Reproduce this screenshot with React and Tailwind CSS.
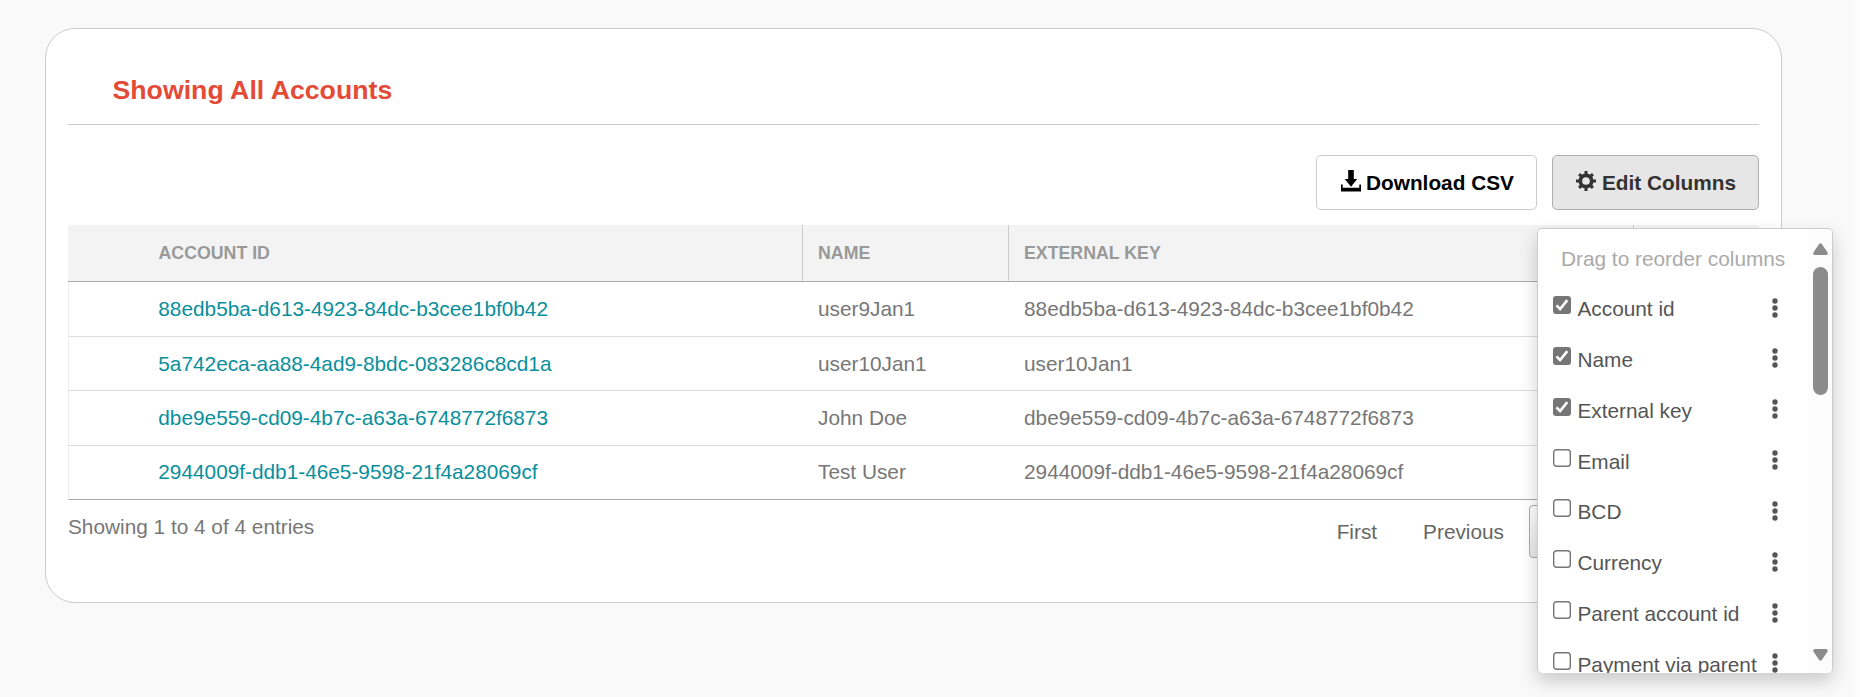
const rows = [
  ["88edb5ba-d613-4923-84dc-b3cee1bf0b42", "user9Jan1", "88edb5ba-d613-4923-84dc-b3cee1bf0b42"],
  ["5a742eca-aa88-4ad9-8bdc-083286c8cd1a", "user10Jan1", "user10Jan1"],
  ["dbe9e559-cd09-4b7c-a63a-6748772f6873", "John Doe", "dbe9e559-cd09-4b7c-a63a-6748772f6873"],
  ["2944009f-ddb1-46e5-9598-21f4a28069cf", "Test User", "2944009f-ddb1-46e5-9598-21f4a28069cf"],
];

const columns = [
  ["Account id", true],
  ["Name", true],
  ["External key", true],
  ["Email", false],
  ["BCD", false],
  ["Currency", false],
  ["Parent account id", false],
  ["Payment via parent", false],
];

function DownloadIcon() {
  return (
    <svg className="h-[22px] w-5 shrink-0" viewBox="0 0 20 22" fill="currentColor">
      <path d="M7.200 0h5.600v9H16.200L10 16.700 3.800 9h3.400zM0 14.500h1.700v3.200h16.600v-3.200H20v7H0z" />
    </svg>
  );
}

function GearIcon() {
  return (
    <svg className="size-5 shrink-0" viewBox="0 0 20 20" fill="none" stroke="currentColor">
      <circle cx="10" cy="10" r="5.700" strokeWidth="3.700" />
      <path
        d="M10 0v4M10 16v4M0 10h4M16 10h4M3.100 3.100l2.800 2.800M14.100 14.100l2.800 2.800M3.100 16.900l2.800-2.800M14.100 5.900l2.800-2.800"
        strokeWidth="3"
      />
    </svg>
  );
}

function CheckBox({ checked }) {
  return (
    <svg className="size-[18px] shrink-0" viewBox="0 0 18 18" fill="none">
      {checked ? (
        <>
          <rect width="18" height="18" rx="3" fill="#767676" />
          <path d="M3.500 9.300l3.600 3.800 7.200-9" stroke="#fff" strokeWidth="2.600" />
        </>
      ) : (
        <rect x="0.700" y="0.700" width="16.600" height="16.600" rx="2.800" fill="#fff" stroke="#767676" strokeWidth="1.400" />
      )}
    </svg>
  );
}

function Dots() {
  return (
    <svg className="h-5 w-1.5 shrink-0" viewBox="0 0 6 20" fill="#555">
      <circle cx="3" cy="3" r="2.700" />
      <circle cx="3" cy="10" r="2.700" />
      <circle cx="3" cy="17" r="2.700" />
    </svg>
  );
}

function ColumnMenu() {
  return (
    <div className="absolute top-[73px] right-[-74px] flex h-[445px] w-[296px] overflow-hidden rounded-[5px] border border-b-0 border-[#ccc] bg-white font-normal shadow-[0_8px_18px_rgba(0,0,0,0.19)]">
      <div className="w-[270px] shrink-0 pl-[15px]">
        <div className="mt-[15px] h-[30px] pl-[8px] leading-[30px] whitespace-nowrap text-[#aaa]">Drag to reorder columns</div>
        <ul className="mt-[14px]">
          {columns.map(([label, checked]) => (
            <li key={label} className="flex h-[50.850px] items-start text-[#555]">
              <div className="mt-[8px]">
                <CheckBox checked={checked} />
              </div>
              <span className="ml-[6.500px] w-[194.300px] pt-[6px] leading-[30px] whitespace-nowrap">{label}</span>
              <div className="mt-[9.500px]">
                <Dots />
              </div>
            </li>
          ))}
        </ul>
      </div>
      <div className="flex flex-1 flex-col items-center bg-[#fcfcfc] pt-[14px] pb-[12.500px]">
        <svg className="h-3 w-[15px]" viewBox="0 0 15 12" fill="#8b8b8b">
          <path d="M6 1.200Q7.500-.6 9 1.200l5.600 8.200Q15.300 12 13 12H2Q-.3 12 .4 9.400z" />
        </svg>
        <div className="mt-[12px] h-[128px] w-[15px] rounded-full bg-[#8b8b8b]" />
        <svg className="mt-auto h-3 w-[15px]" viewBox="0 0 15 12" fill="#8b8b8b">
          <path d="M6 10.800Q7.500 12.600 9 10.800l5.600-8.200Q15.300 0 13 0H2Q-.3 0 .4 2.600z" />
        </svg>
      </div>
    </div>
  );
}

export default function App() {
  return (
    <div className="h-[697px] overflow-hidden border-r-[5px] border-[#fcfcfc] bg-[#f9f9f9] pt-7 pl-[45px] font-['Liberation_Sans',Arial,sans-serif] text-[20.800px] text-[#777]">
      <main className="h-[575px] w-[1737px] rounded-[30px] border border-[#ccc] bg-white px-[22px]">
        <header className="flex h-24 items-center border-b border-[#ccc] pt-[26px] pl-[44.500px]">
          <h1 className="text-[26.700px] leading-8 font-bold text-[#e44b37]">Showing All Accounts</h1>
        </header>

        <div className="relative mt-[30px] flex justify-end gap-[15px] font-bold">
          <button className="flex h-[55px] w-[221px] items-center rounded-[5px] border border-[#ccc] bg-white pl-[24px] text-black">
            <span className="-mt-1"><DownloadIcon /></span>
            <span className="ml-[5px] whitespace-nowrap">Download CSV</span>
          </button>
          <button className="flex h-[55px] w-[207px] items-center rounded-[5px] border border-[#adadad] bg-[#e6e6e6] pl-[23px] text-[#333]">
            <span className="-mt-1"><GearIcon /></span>
            <span className="ml-[6px] whitespace-nowrap">Edit Columns</span>
          </button>
          <ColumnMenu />
        </div>

        <table className="mt-[15px] w-full table-fixed border-separate border-spacing-0">
          <colgroup>
            <col className="w-[734px]" />
            <col className="w-[206px]" />
            <col className="w-[625px]" />
            <col />
          </colgroup>
          <thead className="bg-[#f3f3f3] text-left text-[17.750px] text-[#999]">
            <tr className="h-[57px]">
              <th className="border-b border-b-[#aaa] pl-[90.500px]">ACCOUNT ID</th>
              <th className="border-b border-l border-b-[#aaa] border-l-[#ccc] pl-[15px]">NAME</th>
              <th className="border-b border-l border-b-[#aaa] border-l-[#ccc] pl-[15px]">EXTERNAL KEY</th>
              <th className="border-b border-l border-b-[#aaa] border-l-[#ccc]" />
            </tr>
          </thead>
          <tbody>
            {rows.map(([id, name, key]) => (
              <tr key={id} className="h-[54px] odd:h-[55px] [&>td]:border-b [&>td]:border-b-[#ddd] last:[&>td]:border-b-[#aaa] last:[&>td]:pb-[2px]">
                <td className="border-l border-l-[#eee] pl-[89.300px] text-[#098f9c]">{id}</td>
                <td className="pl-[16px]">{name}</td>
                <td className="pl-[16px]">{key}</td>
                <td />
              </tr>
            ))}
          </tbody>
        </table>

        <footer className="flex justify-between">
          <p className="mt-[11px] leading-8">Showing 1 to 4 of 4 entries</p>
          <nav className="mt-[5px] mr-[184px] flex h-[53px] items-center text-[#666]">
            <span className="mr-[46px]">First</span>
            <span className="mr-[25px]">Previous</span>
            <span className="h-[53px] w-[46px] rounded-[4px] border border-[#aaa] bg-linear-to-b from-white to-[#e8e8e8]" />
          </nav>
        </footer>
      </main>
    </div>
  );
}
